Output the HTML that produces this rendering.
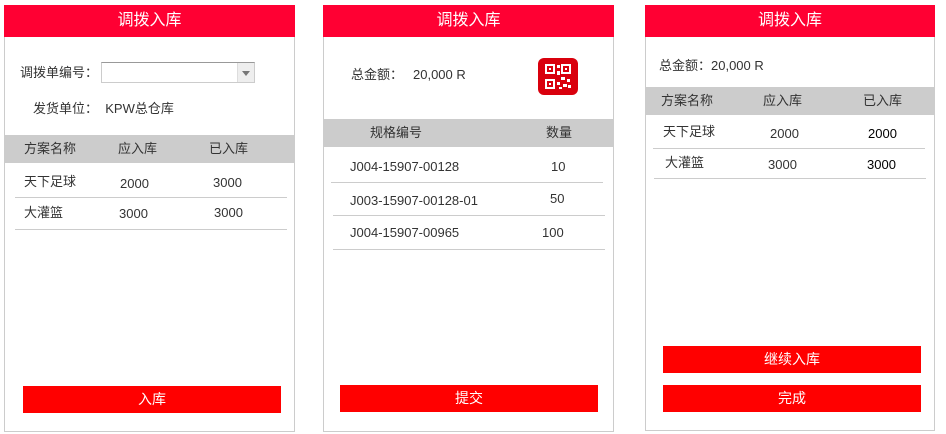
<!DOCTYPE html>
<html><head><meta charset="utf-8"><style>
*{margin:0;padding:0;box-sizing:border-box}
body{width:946px;height:434px;background:#fff;position:relative;overflow:hidden;font-family:"Liberation Sans","Noto Sans CJK SC",sans-serif;font-size:13px;color:#333}
.p{position:absolute;border:1px solid #ccc;border-top:none;background:#fff}
.h{position:absolute;left:-1px;right:-1px;top:0;height:32px;background:#ff0033;color:#fff;font-size:16px;text-align:center;line-height:32px}
.a{position:absolute;white-space:nowrap;line-height:16px}
.g{position:absolute;background:#ccc}
.btn{position:absolute;background:#ff0000;color:#fff;font-size:14px;text-align:center;line-height:27px}
.l{position:absolute;height:1px;background:#ccc}
</style></head><body>

<div class="p" style="left:4px;top:5px;width:291px;height:427px">
<div class="h">调拨入库</div>
<div class="a" style="left:15px;top:60px">调拨单编号：</div>
<div class="a" style="left:96px;top:57px;width:154px;height:21px;border:1px solid #ccc;border-top:1px solid #999"><div style="position:absolute;right:0;top:0;width:17px;height:19px;background:#eee;border-left:1px solid #ddd"><div style="position:absolute;left:4px;top:8px;border-left:4px solid transparent;border-right:4px solid transparent;border-top:5px solid #777"></div></div></div>
<div class="a" style="left:28px;top:96px">发货单位：&nbsp; KPW总仓库</div>
<div class="g" style="left:0;right:0;top:130px;height:28px"></div>
<div class="a" style="left:19px;top:136px">方案名称</div>
<div class="a" style="left:113px;top:136px">应入库</div>
<div class="a" style="left:204px;top:136px">已入库</div>
<div class="a" style="left:19px;top:169px">天下足球</div>
<div class="a" style="left:115px;top:171px">2000</div>
<div class="a" style="left:208px;top:170px">3000</div>
<div class="l" style="left:10px;width:272px;top:192px"></div>
<div class="a" style="left:19px;top:200px">大灌篮</div>
<div class="a" style="left:114px;top:201px">3000</div>
<div class="a" style="left:209px;top:200px">3000</div>
<div class="l" style="left:10px;width:272px;top:224px"></div>
<div class="btn" style="left:18px;top:381px;width:258px;height:27px">入库</div>
</div>

<div class="p" style="left:323px;top:5px;width:291px;height:427px">
<div class="h">调拨入库</div>
<div class="a" style="left:27px;top:62px">总金额：</div>
<div class="a" style="left:89px;top:62px">20,000 R</div>
<svg class="a" style="left:214px;top:53px" width="40" height="37" viewBox="0 0 40 37"><rect x="0" y="0" width="40" height="37" rx="6" fill="#d9000d"/><g fill="none" stroke="#fff" stroke-width="2"><rect x="8" y="7" width="8" height="8"/><rect x="24" y="7" width="8" height="8"/><rect x="8" y="22" width="8" height="8"/></g><g fill="#fff"><rect x="11" y="10" width="2" height="2"/><rect x="27" y="10" width="2" height="2"/><rect x="11" y="25" width="2" height="2"/><rect x="19" y="7" width="3" height="3"/><rect x="19" y="13" width="3" height="4"/><rect x="23" y="19" width="4" height="3"/><rect x="29" y="21" width="3" height="3"/><rect x="19" y="24" width="3" height="3"/><rect x="25" y="26" width="4" height="3"/><rect x="30" y="27" width="3" height="3"/><rect x="21" y="29" width="3" height="2"/></g></svg>
<div class="g" style="left:0;right:0;top:114px;height:28px"></div>
<div class="a" style="left:46px;top:120px">规格编号</div>
<div class="a" style="left:222px;top:120px">数量</div>
<div class="a" style="left:26px;top:154px">J004-15907-00128</div>
<div class="a" style="left:227px;top:154px">10</div>
<div class="l" style="left:7px;width:272px;top:177px"></div>
<div class="a" style="left:26px;top:188px">J003-15907-00128-01</div>
<div class="a" style="left:226px;top:186px">50</div>
<div class="l" style="left:9px;width:272px;top:210px"></div>
<div class="a" style="left:26px;top:220px">J004-15907-00965</div>
<div class="a" style="left:218px;top:220px">100</div>
<div class="l" style="left:9px;width:272px;top:244px"></div>
<div class="btn" style="left:16px;top:380px;width:258px;height:27px">提交</div>
</div>

<div class="p" style="left:645px;top:5px;width:290px;height:426px">
<div class="h">调拨入库</div>
<div class="a" style="left:13px;top:53px">总金额：20,000 R</div>
<div class="g" style="left:0;right:0;top:82px;height:28px"></div>
<div class="a" style="left:15px;top:88px">方案名称</div>
<div class="a" style="left:117px;top:88px">应入库</div>
<div class="a" style="left:217px;top:88px">已入库</div>
<div class="a" style="left:17px;top:119px">天下足球</div>
<div class="a" style="left:124px;top:121px">2000</div>
<div class="a" style="left:222px;top:121px;color:#000">2000</div>
<div class="l" style="left:7px;width:272px;top:143px"></div>
<div class="a" style="left:19px;top:150px">大灌篮</div>
<div class="a" style="left:122px;top:152px">3000</div>
<div class="a" style="left:221px;top:152px;color:#000">3000</div>
<div class="l" style="left:8px;width:272px;top:173px"></div>
<div class="btn" style="left:17px;top:341px;width:258px;height:27px">继续入库</div>
<div class="btn" style="left:17px;top:380px;width:258px;height:27px">完成</div>
</div>

</body></html>
